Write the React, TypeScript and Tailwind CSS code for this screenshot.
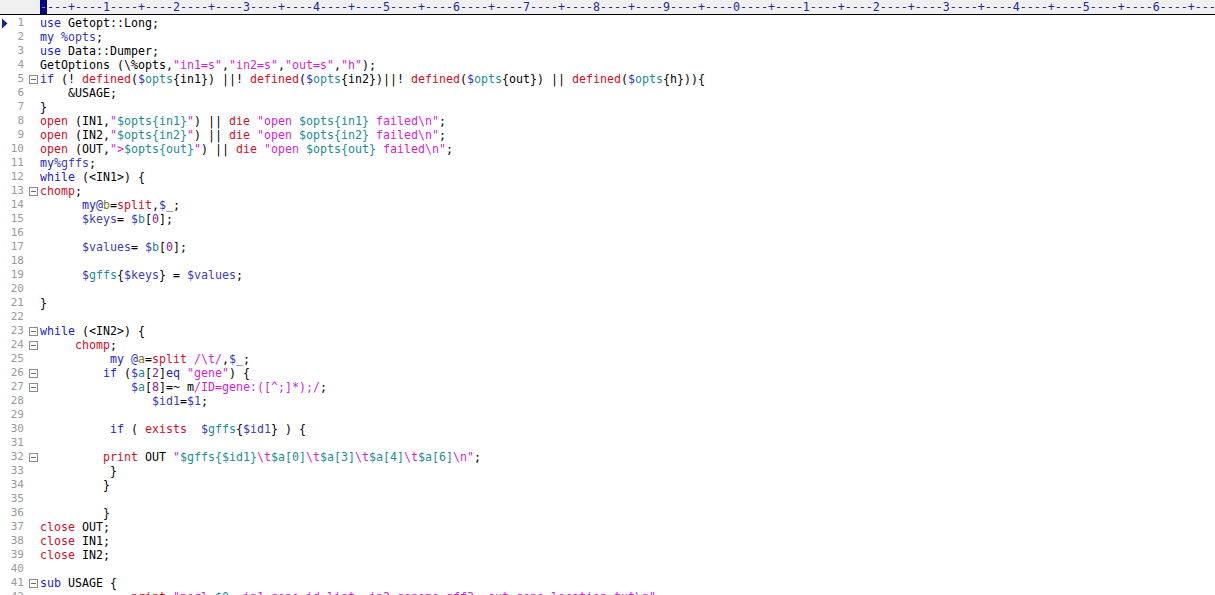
import React from "react";

const MONO = { fontFamily: '"DejaVu Sans Mono", "Liberation Mono", monospace' };

const code: string[] = [
  "use Getopt::Long;",
  "my %opts;",
  "use Data::Dumper;",
  'GetOptions (\\%opts,"in1=s","in2=s","out=s","h");',
  "if (! defined($opts{in1}) ||! defined($opts{in2})||! defined($opts{out}) || defined($opts{h})){",
  "    &USAGE;",
  "}",
  'open (IN1,"$opts{in1}") || die "open $opts{in1} failed\\n";',
  'open (IN2,"$opts{in2}") || die "open $opts{in2} failed\\n";',
  'open (OUT,">$opts{out}") || die "open $opts{out} failed\\n";',
  "my%gffs;",
  "while (<IN1>) {",
  "chomp;",
  "      my@b=split,$_;",
  "      $keys= $b[0];",
  "",
  "      $values= $b[0];",
  "",
  "      $gffs{$keys} = $values;",
  "",
  "}",
  "",
  "while (<IN2>) {",
  "     chomp;",
  "          my @a=split /\\t/,$_;",
  '         if ($a[2]eq "gene") {',
  "             $a[8]=~ m/ID=gene:([^;]*);/;",
  "                $id1=$1;",
  "",
  "          if ( exists  $gffs{$id1} ) {",
  "",
  '         print OUT "$gffs{$id1}\\t$a[0]\\t$a[3]\\t$a[4]\\t$a[6]\\n";',
  "          }",
  "         }",
  "",
  "         }",
  "close OUT;",
  "close IN1;",
  "close IN2;",
  "",
  "sub USAGE {",
  '             print "perl $0 -in1 gene_id.list -in2 genome.gff3 -out gene_location.txt\\n";',
];

const folds = new Set([5, 13, 23, 24, 26, 27, 32, 41]);
const RED = new Set(["open", "die", "defined", "close", "chomp", "split", "exists", "print"]);
const BLUE = new Set(["use", "my", "if", "while", "sub", "eq"]);

type Tok = { t: string; c: string };

function strToks(s: string): Tok[] {
  const out: Tok[] = [];
  s.split(/(\$\w+(?:\{[^}]*\}|\[\d+\])?)/).forEach((p, i) => {
    if (p) out.push({ t: p, c: i % 2 ? "text-[#1d8b94]" : "text-[#d21fd2]" });
  });
  return out;
}

function tokenize(line: string): Tok[] {
  const re =
    /("(?:[^"\\]|\\.)*")|(\/(?:[^\/\\]|\\.)*\/)|(\\%\w+)|([\$@%])(\w+)|(&\w+)|([A-Za-z_]\w*)|(\d+)|([\s\S])/g;
  const out: Tok[] = [];
  let m: RegExpExecArray | null;
  while ((m = re.exec(line))) {
    if (m[1]) out.push(...strToks(m[1]));
    else if (m[2]) out.push({ t: m[2], c: "text-[#d21fd2]" });
    else if (m[3]) out.push({ t: m[3], c: "text-black" });
    else if (m[4]) {
      const next = line[re.lastIndex];
      out.push({ t: m[4], c: "text-[#3434c4]" });
      let c = "text-[#4040b8]";
      if (m[4] === "@") c = "text-[#8a7a14]";
      else if (m[4] === "$" && (next === "{" || next === "[")) c = "text-[#1d8b94]";
      out.push({ t: m[5], c });
    } else if (m[6]) out.push({ t: m[6], c: "text-black" });
    else if (m[7]) {
      const w = m[7];
      out.push({ t: w, c: RED.has(w) ? "text-[#d0102a]" : BLUE.has(w) ? "text-[#2222d0]" : "text-black" });
    } else if (m[8]) out.push({ t: m[8], c: "text-[#8a1a8a]" });
    else out.push({ t: m[9], c: "text-black" });
  }
  return out;
}

function ruler() {
  let s = "";
  for (let i = 2; i <= 175; i++) {
    if (i % 10 === 0) s += String((i / 10) % 10);
    else if (i % 5 === 0) s += "+";
    else s += "-";
  }
  return s;
}

export default function App() {
  return (
    <div className="h-[595px] w-[1215px] overflow-hidden bg-white text-[11.63px] leading-[14px]" style={MONO}>
      <div className="flex h-[15px] border-b border-black bg-[#f0f0f0] text-[#25259a] whitespace-pre">
        <div className="w-[40px] shrink-0" />
        <span className="bg-[#000080] text-[#8080c0]">-</span>
        <span>{ruler()}</span>
      </div>
      <div className="pt-[1px]">
        {code.map((line, idx) => {
          const n = idx + 1;
          return (
            <div key={n} className="flex h-[14px] items-center">
              <div className="flex w-[9px] shrink-0 justify-center">
                {n === 1 && (
                  <svg width="7" height="11" viewBox="0 0 7 11">
                    <path d="M1 0.5 L6.5 5.5 L1 10.5 Z" fill="#1a237e" />
                  </svg>
                )}
              </div>
              <div className="w-[15px] shrink-0 text-right text-[11px] text-[#9a9a9a]">{n}</div>
              <div className="w-[16px] shrink-0">
                {folds.has(n) && (
                  <div className="ml-[5px] flex h-[9px] w-[9px] items-center justify-center border border-[#8c8c8c]">
                    <div className="h-px w-[5px] bg-[#6c6c6c]" />
                  </div>
                )}
              </div>
              <div className="whitespace-pre">
                {tokenize(line).map((tk, i) => (
                  <span key={i} className={tk.c}>
                    {tk.t}
                  </span>
                ))}
              </div>
            </div>
          );
        })}
      </div>
    </div>
  );
}
